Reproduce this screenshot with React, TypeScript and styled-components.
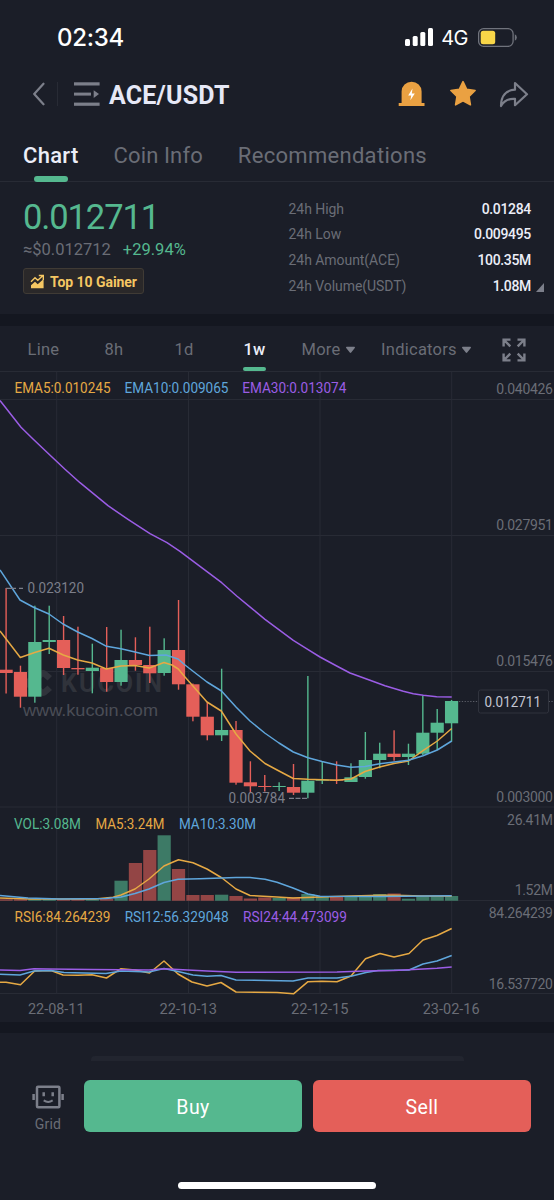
import React from "react";
import styled, { createGlobalStyle } from "styled-components";

const c = {
  bg: "#1b1e28",
  band: "#141720",
  line: "#282b35",
  grey: "#6a6d76",
  icon: "#7c7f8a",
  white: "#eceef8",
  green: "#55b88f",
  red: "#e45f59",
  orange: "#eaa142",
  yellow: "#f5c763",
  amber: "#e6a944",
  blue: "#5fa6dc",
  purple: "#9b5de5",
};

const GlobalStyle = createGlobalStyle`
  * { box-sizing: border-box; }
  body {
    margin: 0;
    background: ${c.bg};
    font-family: Roboto, "Liberation Sans", sans-serif;
    color: ${c.white};
  }
`;

const Screen = styled.div`
  width: 554px;
  height: 1200px;
  display: flex;
  flex-direction: column;
  overflow: hidden;
  background: ${c.bg};
`;

const StatusBar = styled.div`
  height: 74px;
  padding: 0 37px 0 57px;
  display: flex;
  align-items: center;
  justify-content: space-between;
  font-family: Inter, sans-serif;
`;
const Clock = styled.span`
  font-size: 24px;
  font-weight: 500;
  color: #fff;
  letter-spacing: -0.25px;
`;
const StatusIcons = styled.div`
  display: flex;
  align-items: center;
`;
const Network = styled.span`
  margin: 2px 10px 0 8px;
  font-size: 20px;
  color: #fff;
  letter-spacing: -0.5px;
`;

const Header = styled.header`
  height: 40px;
  padding: 0 25px 0 32px;
  display: flex;
  align-items: center;
  justify-content: space-between;
`;
const HeaderGroup = styled.div<{ $gap?: number }>`
  display: flex;
  align-items: center;
  gap: ${(p) => p.$gap ?? 0}px;
`;
const Divider = styled.span`
  width: 1px;
  height: 24px;
  margin: 0 15px 0 12px;
  background: ${c.line};
`;
const Pair = styled.h1`
  margin: 4px 0 0 9px;
  font-size: 25px;
  line-height: 30px;
  font-weight: 700;
  letter-spacing: 0.2px;
  color: #e6e8f6;
`;

const Tabs = styled.nav`
  height: 68px;
  padding-left: 23px;
  display: flex;
  gap: 35px;
  border-bottom: 1px solid ${c.line};
`;
const Tab = styled.span<{ $active?: boolean; $ls: number }>`
  height: 68px;
  padding-top: 28px;
  display: flex;
  flex-direction: column;
  justify-content: space-between;
  align-items: center;
  font-size: 22px;
  line-height: 28px;
  font-weight: ${(p) => (p.$active ? 500 : 400)};
  letter-spacing: ${(p) => p.$ls}px;
  color: ${(p) => (p.$active ? c.white : c.grey)};
`;
const Underline = styled.i<{ $w: number; $h: number }>`
  width: ${(p) => p.$w}px;
  height: ${(p) => p.$h}px;
  border-radius: 3px;
  background: ${c.green};
`;

const Summary = styled.section`
  height: 132px;
  padding: 14px 10px 0 23px;
  display: flex;
  justify-content: space-between;
`;
const Price = styled.div`
  margin-top: 2px;
  height: 40px;
  font-size: 34.5px;
  line-height: 39px;
  letter-spacing: -1.1px;
  color: ${c.green};
`;
const PriceSub = styled.div`
  margin-top: 1px;
  display: flex;
  gap: 12px;
  font-size: 16.5px;
  line-height: 22px;
`;
const Fiat = styled.span`
  color: ${c.grey};
`;
const Change = styled.span`
  color: ${c.green};
`;
const Badge = styled.div`
  width: 121px;
  height: 26px;
  margin-top: 7px;
  padding: 1px 0 0 6px;
  display: flex;
  align-items: center;
  gap: 5px;
  border: 1px solid #403b35;
  border-radius: 3px;
  background: #2a2829;
  color: ${c.yellow};
  font-size: 14px;
  font-weight: 700;
  letter-spacing: -0.05px;
  white-space: nowrap;
`;
const StatsWrap = styled.div`
  display: flex;
  align-items: flex-end;
  gap: 5px;
  height: 110px;
`;
const Stats = styled.dl`
  width: 242.5px;
  height: 110px;
  margin: 0;
`;
const Stat = styled.div`
  height: 25.6px;
  display: flex;
  align-items: center;
  justify-content: space-between;
  font-size: 14px;
`;
const StatName = styled.dt`
  color: ${c.grey};
  letter-spacing: -0.05px;
`;
const StatValue = styled.dd`
  margin: 0;
  font-weight: 500;
  letter-spacing: -0.33px;
  color: ${c.white};
`;
const Corner = styled.svg`
  margin-bottom: 14px;
`;

const Band = styled.div<{ $h: number }>`
  flex: none;
  height: ${(p) => p.$h}px;
  background: ${c.band};
`;

const Toolbar = styled.div`
  height: 46px;
  padding-left: 8px;
  display: grid;
  grid-template-columns: 71px 70px 70px 71px 77px 119px 56px;
  border-bottom: 1px solid ${c.line};
`;
const Tool = styled.span<{ $active?: boolean }>`
  position: relative;
  padding-top: 2px;
  display: flex;
  align-items: center;
  justify-content: center;
  gap: 4px;
  font-size: 16.5px;
  letter-spacing: 0.25px;
  font-weight: ${(p) => (p.$active ? 500 : 400)};
  color: ${(p) => (p.$active ? c.white : c.grey)};
`;
const ToolMark = styled(Underline)`
  position: absolute;
  bottom: 0;
`;

const ChartArea = styled.svg`
  display: block;
  flex: none;
  font-family: Roboto, sans-serif;
`;

const AxisText = styled.text`
  font-size: 14px;
  letter-spacing: -0.3px;
  text-anchor: end;
  fill: ${c.grey};
`;

const Footer = styled.footer`
  flex: 1;
  padding: 23px 23px 0;
  display: flex;
  flex-direction: column;
`;
const Hint = styled.div`
  width: 373px;
  height: 5px;
  margin-left: 68px;
  border-radius: 4px 4px 0 0;
  background: #22252f;
`;
const Actions = styled.div`
  margin-top: 19px;
  height: 52px;
  display: flex;
  gap: 11px;
`;
const GridLink = styled.div`
  width: 50px;
  padding-top: 5px;
  display: flex;
  flex-direction: column;
  align-items: center;
  gap: 7px;
  color: ${c.grey};
  font-size: 14px;
  letter-spacing: 0.2px;
`;
const Trade = styled.button<{ $color: string }>`
  flex: 1;
  border: 0;
  padding: 3px 0 0;
  border-radius: 6px;
  background: ${(p) => p.$color};
  color: #fff;
  font: 400 19.5px Roboto, sans-serif;
  letter-spacing: 0.4px;
`;
const HomeBar = styled.div`
  width: 198px;
  height: 7px;
  margin: 50px auto 0;
  border-radius: 4px;
  background: #fff;
`;

const Caret = () => (
  <svg width="11" height="8" viewBox="0 0 11 8">
    <path d="M1.6 0.7h7.8q1 0.4 0.4 1.3L6.2 6.6q-0.7 0.8-1.4 0L1.2 2q-0.6-0.9 0.4-1.3z" fill={c.icon} />
  </svg>
);

type Pt = [number, number];
type Candle = [up: 0 | 1, high: number, low: number, top: number, bottom: number, vol: number];

const CANDLES: Candle[] = [
  [0, 588, 693.5, 669.7, 673, 899.3],
  [0, 665.7, 707.7, 672, 696.7, 899.3],
  [1, 605.7, 702.7, 642, 696.7, 899],
  [1, 605.7, 654, 640, 642, 899],
  [0, 616, 675, 640, 668, 899.3],
  [0, 626.7, 674.7, 668, 669.3, 899.3],
  [1, 643.7, 693.3, 667.7, 671, 899.3],
  [0, 627, 691.7, 668, 682, 899],
  [1, 629.7, 685.7, 660, 682, 880.7],
  [0, 637.3, 670.7, 660, 665, 863],
  [0, 626.7, 683, 665, 673.3, 850],
  [1, 638.3, 675.7, 650, 673, 835.3],
  [0, 600, 689.7, 650, 684.3, 869],
  [0, 683.5, 721.3, 684.3, 716.7, 895],
  [0, 702.3, 740.3, 716.7, 735.3, 895],
  [1, 668.7, 741, 730, 735.3, 894.7],
  [0, 721, 784.7, 730, 782.7, 896],
  [0, 761.3, 793, 782.3, 786.3, 898.5],
  [0, 775, 791.5, 786, 787, 897.5],
  [1, 782.3, 791, 786, 787, 898],
  [0, 764, 795, 787, 792.7, 897.5],
  [1, 676, 798.3, 780.7, 792.7, 894],
  [1, 761.7, 784, 779.7, 780.7, 896],
  [0, 761.3, 784, 779.7, 780.7, 896.5],
  [1, 763.3, 782, 777.3, 782, 896],
  [1, 732, 778.7, 760, 777, 895],
  [1, 742.7, 768.3, 753.7, 760, 894],
  [0, 730.3, 760.7, 753.7, 757, 893.5],
  [1, 743.7, 765, 753.7, 757, 898.7],
  [1, 695.7, 755, 732.7, 753.7, 896.5],
  [1, 709, 750, 722.7, 732.7, 896],
  [1, 700, 741.7, 701, 723.3, 896],
];
const candleX = (i: number) => 6.1 + i * 14.37;

const EMA30: Pt[] = [[0, 400.5], [21, 427.3], [33, 439], [48, 453.3], [65, 469.3], [80, 482.7], [108, 505.7], [128, 519.3], [150, 533.7], [167, 542.7], [180, 551.3], [188, 557.3], [207, 571.7], [221.7, 582.7], [236.7, 596], [251.7, 608.3], [265, 619.3], [293.3, 640.3], [307.7, 649.3], [320, 657], [336.7, 666], [350, 673], [370, 680.3], [385, 685.7], [403.3, 691.3], [413.3, 693.7], [423.3, 695.3], [436.7, 696.7], [451.7, 697]];
const EMA10: Pt[] = [[0, 570], [20, 600], [34, 607.5], [49, 614], [63, 624], [77.7, 632], [92, 638.5], [106.5, 646.3], [121, 648.7], [135, 652], [149.5, 655.5], [166, 655], [178, 659], [185, 665], [192.7, 671], [207, 682], [221.5, 691], [236, 707], [250, 721], [264.7, 733], [279, 743], [293.3, 752], [308, 757.7], [322, 761.5], [336.7, 765], [351, 767.3], [365, 766.5], [379.7, 763.7], [394, 762], [408.5, 760.3], [423, 755.7], [437.3, 750], [451.7, 741]];
const EMA5: Pt[] = [[0, 631], [20.3, 657.5], [34.7, 652.5], [49, 648.3], [63.3, 655], [77.7, 660], [92, 663], [106.3, 669], [121, 666], [135, 665.5], [149.3, 668], [164, 662.5], [172, 665], [178.3, 669], [185, 677], [207, 702], [221.3, 711], [236, 734], [250, 751], [265, 763.5], [279, 771], [293.3, 778.5], [308, 779.3], [322, 779.7], [336.7, 780.3], [351, 779], [365, 771.5], [379.7, 767], [394, 763.5], [408.5, 761], [423, 750.7], [437.3, 741], [451.7, 728.5]];
const VMA5: Pt[] = [[0, 898], [30, 899], [95, 899], [113, 897.3], [121, 895], [135, 889], [149, 879], [164, 866], [172, 862.5], [178.5, 859.7], [193, 862.7], [207, 869], [222, 878], [236, 889], [250, 895.5], [277, 897], [293, 898], [320, 897], [351, 896], [380, 895.3], [394, 895.3], [423, 896], [451.7, 896]];
const VMA10: Pt[] = [[0, 895.5], [28, 898], [60, 899], [106, 898.5], [121, 897], [135, 893.5], [149, 889], [164, 882.5], [178, 879.3], [200, 878.7], [236, 877.5], [250, 877.5], [265, 879.3], [277, 882.3], [293, 888], [308, 894], [320, 896.3], [380, 896.5], [451.7, 895.7]];
const RSI6: Pt[] = [[0, 982.3], [6, 982.3], [20.5, 984.7], [34.7, 971], [51, 970.5], [63, 975], [78, 975.3], [92, 974.7], [106.5, 978], [121, 968.7], [135, 970], [149.5, 973], [164, 961], [178, 974], [192, 982], [207, 986], [221, 982.5], [236, 992], [277, 992.5], [293.5, 993.8], [308, 981.7], [322, 981.3], [337, 981.7], [351, 976], [365.5, 958.7], [380, 953.5], [394, 957], [409, 953.5], [423, 940], [437, 935.5], [451.7, 928.5]];
const RSI12: Pt[] = [[0, 974.3], [20, 975], [34, 971], [51, 970.5], [64, 972.5], [106, 973.5], [121, 971], [149, 972], [164, 968.5], [178, 971.5], [193, 975], [207, 976.3], [221, 975.5], [236, 980], [293, 981], [308, 978], [337, 978], [352, 976], [366, 972.5], [378, 970.5], [409, 970], [423, 964], [437, 961], [451.7, 955.5]];
const RSI24: Pt[] = [[0, 970], [20, 970.5], [34, 968.8], [49, 969], [92, 969.5], [149, 970], [164, 968.7], [178, 969.5], [207, 971], [236, 972.3], [337, 972], [365, 971], [394, 970.5], [423, 969], [437, 968.3], [451.7, 967]];

const AXIS: [string, number][] = [
  ["0.040426", 394],
  ["0.027951", 530],
  ["0.015476", 666],
  ["0.003000", 802],
  ["26.41M", 825],
  ["1.52M", 895],
  ["84.264239", 918],
  ["16.537720", 988.5],
];

const Line = ({ pts, color }: { pts: Pt[]; color: string }) => (
  <polyline points={pts.map((p) => p.join(",")).join(" ")} fill="none" stroke={color} strokeWidth="1.5" strokeLinejoin="round" />
);

const Label = ({ x, y, w, fill = c.grey, children }: {
  x: number; y: number; w: number; fill?: string; children: string;
}) => (
  <text x={x} y={y} textLength={w} lengthAdjust="spacingAndGlyphs" fontSize="14.5" fill={fill}>
    {children}
  </text>
);

const PriceChart = () => (
  <ChartArea width="554" height="650" viewBox="0 372 554 650">
    <g stroke={c.line} strokeWidth="1">
      {[399.5, 535.5, 671.5, 807, 900.5, 993.5].map((y) => <path key={y} d={`M0 ${y}H554`} />)}
      {[56.7, 188.5, 320, 451.7].map((x) => <path key={x} d={`M${x} 372V993.5`} />)}
    </g>

    <g fill="#30333b">
      <path d="M23 683l9-9v18z" />
      <path d="M33 677l7-6q3-2 6 0l6 5-4.5 4.5-4.5-4-6.5 6.5 6.5 6.5 4.5-4 4.5 4.5-6 5q-3 2-6 0l-7-6z" />
      <text x="61" y="692" fontSize="25" fontWeight="700" textLength="101" lengthAdjust="spacing">KUCOIN</text>
    </g>
    <text x="23" y="716" textLength="135" lengthAdjust="spacingAndGlyphs" fontFamily="Liberation Sans" fontSize="17" fill="#4a4d56">www.kucoin.com</text>

    {CANDLES.map(([up, high, low, top, bottom, vol], i) => (
      <g key={i} fill={up ? c.green : c.red}>
        <rect x={candleX(i) - 0.7} y={high} width="1.4" height={low - high} />
        <rect x={candleX(i) - 6.6} y={top} width="13.2" height={bottom - top} />
        <rect x={candleX(i) - 6.6} y={vol} width="13.2" height={900.7 - vol} opacity="0.6" />
      </g>
    ))}

    <Line pts={EMA5} color={c.amber} />
    <Line pts={EMA10} color={c.blue} />
    <Line pts={EMA30} color={c.purple} />
    <Line pts={VMA5} color={c.amber} />
    <Line pts={VMA10} color={c.blue} />
    <Line pts={RSI6} color={c.amber} />
    <Line pts={RSI12} color={c.blue} />
    <Line pts={RSI24} color={c.purple} />

    <path d="M6 588.3h10M19 588.3h4" stroke={c.icon} strokeWidth="1.2" />
    <path d="M289 798.3h18" stroke={c.icon} strokeWidth="1.2" strokeDasharray="5 1.5" />
    <Label x={27.5} y={592.5} w={56.5} fill={c.icon}>0.023120</Label>
    <Label x={228.5} y={803} w={56.5} fill={c.icon}>0.003784</Label>

    <path d="M459 701.5H554" stroke="#5a5d66" strokeWidth="1" strokeDasharray="1.3 1.5" />
    <rect x="478.5" y="690" width="70" height="23" rx="2" fill={c.bg} stroke="#30333d" />
    <Label x={484.5} y={707} w={56.5} fill="#c3c6d2">0.012711</Label>

    <Label x={14.5} y={392.5} w={96} fill={c.amber}>EMA5:0.010245</Label>
    <Label x={124.5} y={392.5} w={104} fill={c.blue}>EMA10:0.009065</Label>
    <Label x={242.3} y={392.5} w={104} fill={c.purple}>EMA30:0.013074</Label>

    <Label x={14} y={829} w={67} fill={c.green}>VOL:3.08M</Label>
    <Label x={95.5} y={829} w={69} fill={c.amber}>MA5:3.24M</Label>
    <Label x={179} y={829} w={77} fill={c.blue}>MA10:3.30M</Label>

    <Label x={14.5} y={922} w={96} fill={c.amber}>RSI6:84.264239</Label>
    <Label x={124.7} y={922} w={104} fill={c.blue}>RSI12:56.329048</Label>
    <Label x={243} y={922} w={104} fill={c.purple}>RSI24:44.473099</Label>

    {AXIS.map(([text, y]) => <AxisText key={text} x="552.7" y={y}>{text}</AxisText>)}

    <Label x={28} y={1013.5} w={56.5}>22-08-11</Label>
    <Label x={159.5} y={1013.5} w={57.5}>22-10-13</Label>
    <Label x={291} y={1013.5} w={57.5}>22-12-15</Label>
    <Label x={422.7} y={1013.5} w={57}>23-02-16</Label>
  </ChartArea>
);

const STATS = [
  ["24h High", "0.01284"],
  ["24h Low", "0.009495"],
  ["24h Amount(ACE)", "100.35M"],
  ["24h Volume(USDT)", "1.08M"],
];

export default function App() {
  return (
    <Screen>
      <GlobalStyle />
      <StatusBar>
        <Clock>02:34</Clock>
        <StatusIcons>
          <svg width="28" height="18" viewBox="0 0 28 18" fill="#fff">
            <rect x="0" y="11" width="5" height="7" rx="1.5" />
            <rect x="7.7" y="8" width="5" height="10" rx="1.5" />
            <rect x="15.3" y="4" width="5" height="14" rx="1.5" />
            <rect x="23" y="0" width="5" height="18" rx="1.5" />
          </svg>
          <Network>4G</Network>
          <svg width="39" height="19" viewBox="0 0 39 19">
            <rect x="0.6" y="0.7" width="34.5" height="17.6" rx="5" fill="none" stroke="#70737c" strokeWidth="1.3" />
            <rect x="2.7" y="2.8" width="14.5" height="13.4" rx="2.5" fill="#f8d648" />
            <path d="M36.8 6.3q2 1 2 3.2t-2 3.2z" fill="#70737c" />
          </svg>
        </StatusIcons>
      </StatusBar>

      <Header>
        <HeaderGroup>
          <svg width="13" height="24" viewBox="0 0 13 24" fill="none" stroke={c.icon} strokeWidth="2.2" strokeLinecap="round" strokeLinejoin="round">
            <path d="M11.5 1.7L2.2 12l9.3 10.3" />
          </svg>
          <Divider />
          <svg width="27" height="26" viewBox="0 0 27 26" fill={c.icon}>
            <rect x="1" y="1.3" width="25.6" height="3.2" />
            <rect x="1" y="11.6" width="17" height="3" />
            <rect x="1" y="21.6" width="25.6" height="3.2" />
            <path d="M20.7 9.2l5.3 3.9-5.3 4z" />
          </svg>
          <Pair>ACE/USDT</Pair>
        </HeaderGroup>
        <HeaderGroup $gap={23}>
          <svg width="27" height="26" viewBox="0 0 27 26">
            <path d="M3.6 22V10.5a10 9.8 0 0 1 20 0V22H26.5v3H0.7v-3z" fill={c.orange} />
            <path d="M14.5 7.5l-4.3 7h3l-0.8 4.7 4.4-6.8h-3z" fill="#fff" />
          </svg>
          <svg width="28" height="28" viewBox="-1 0.5 28 28">
            <path d="M14 2.2l3.7 7.6 8.4 1.2-6.1 5.9 1.4 8.4-7.4-3.9-7.4 3.9 1.4-8.4L1.9 11l8.4-1.2z" fill={c.orange} stroke={c.orange} strokeWidth="1.6" strokeLinejoin="round" />
          </svg>
          <svg width="30" height="27" viewBox="0 0 30 27" fill="none" stroke={c.icon} strokeWidth="2.2" strokeLinejoin="round">
            <path d="M16 2l12 11.2-12 11v-6.3C9 17.3 5 19.5 2 25 2 15 7 9 16 8.7z" />
          </svg>
        </HeaderGroup>
      </Header>

      <Tabs>
        <Tab $active $ls={0.3}>Chart<Underline $w={34} $h={6} /></Tab>
        <Tab $ls={0.12}>Coin Info</Tab>
        <Tab $ls={0.3}>Recommendations</Tab>
      </Tabs>

      <Summary>
        <div>
          <Price>0.012711</Price>
          <PriceSub>
            <Fiat>≈$0.012712</Fiat>
            <Change>+29.94%</Change>
          </PriceSub>
          <Badge>
            <svg width="15" height="15" viewBox="0 0 15 15">
              <path d="M1 14.3v-3l4-3.5 2.7 2.5L13.6 5v9.3z" fill={c.yellow} />
              <path d="M1 7.7l4-4 2.8 2.6L12.5 2M8.8 1.5h4.5V6" fill="none" stroke={c.yellow} strokeWidth="1.4" />
            </svg>
            Top 10 Gainer
          </Badge>
        </div>
        <StatsWrap>
          <Stats>
            {STATS.map(([name, value]) => (
              <Stat key={name}>
                <StatName>{name}</StatName>
                <StatValue>{value}</StatValue>
              </Stat>
            ))}
          </Stats>
          <Corner width="8" height="9" viewBox="0 0 8 9">
            <path d="M8 0v9H0z" fill={c.icon} />
          </Corner>
        </StatsWrap>
      </Summary>

      <Band $h={12} />

      <Toolbar>
        <Tool>Line</Tool>
        <Tool>8h</Tool>
        <Tool>1d</Tool>
        <Tool $active>1w<ToolMark $w={23} $h={4.5} /></Tool>
        <Tool>More<Caret /></Tool>
        <Tool>Indicators<Caret /></Tool>
        <Tool>
          <svg width="24" height="24" viewBox="0 0 24 24" fill="none" stroke={c.icon} strokeWidth="2.4">
            <path d="M1.6 8.5V1.6h6.9M2 2l6.3 6.3M15.5 1.6h6.9v6.9M22 2l-6.3 6.3M1.6 15.5v6.9h6.9M2 22l6.3-6.3M15.5 22.4h6.9v-6.9M22 22l-6.3-6.3" />
          </svg>
        </Tool>
      </Toolbar>

      <PriceChart />
      <Band $h={11} />

      <Footer>
        <Hint />
        <Actions>
          <GridLink>
            <svg width="32" height="24" viewBox="0 0 32 24" fill="none" stroke={c.icon} strokeWidth="2.5">
              <rect x="5" y="1.8" width="22.4" height="20.4" rx="1" />
              <path d="M1.6 9v6M30.6 9v6" />
              <path d="M11.7 7.2v4M20.7 7.2v4" />
              <path d="M11.7 15.4q4.5 3 9 0" strokeWidth="2" />
            </svg>
            Grid
          </GridLink>
          <Trade $color={c.green}>Buy</Trade>
          <Trade $color={c.red}>Sell</Trade>
        </Actions>
        <HomeBar />
      </Footer>
    </Screen>
  );
}
